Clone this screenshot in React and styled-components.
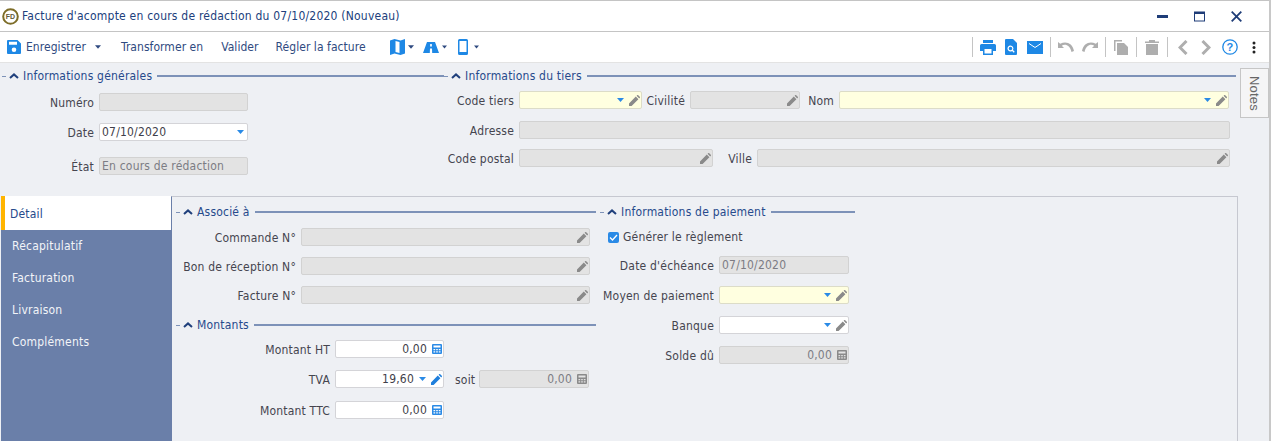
import React from "react";
import styled, { createGlobalStyle } from "styled-components";

const Global = createGlobalStyle`
  html, body { margin: 0; padding: 0; background: #eef0f4; }
  body { font-family: "DejaVu Sans", "Liberation Sans", sans-serif; font-stretch: condensed; font-size: 12px; letter-spacing: .2px; }
  * { box-sizing: border-box; }
`;

const Window = styled.div`
  width: 1271px; height: 441px; overflow: hidden; display: flex; flex-direction: column;
  background: #eef0f4; border-right: 2px solid #c8c8c8; color: #45454f;
`;
const TitleBar = styled.header`
  height: 32px; flex: none; background: #fff; border-top: 1px solid #c4c4c4; border-bottom: 1px solid #c4c4c4;
  display: flex; align-items: center; padding-left: 2px; color: #20407c;
`;
const TitleText = styled.span` margin-left: 3px; font-size: 12px; letter-spacing: .22px; flex: 1; white-space: nowrap; `;
const WinButtons = styled.div` display: flex; align-items: center; gap: 26px; margin-right: 27px; `;
const Toolbar = styled.nav`
  height: 31px; flex: none; background: #fff; border-bottom: 1px solid #e3e3e3; display: flex; align-items: center; padding-left: 7px; color: #2f4a80; letter-spacing: .05px;
`;
const ToolText = styled.span` margin-left: ${p => p.$ml}px; white-space: nowrap; `;
const ToolIcon = styled.span` display: inline-flex; margin-left: ${p => p.$ml || 0}px; `;
const Sep = styled.span` width: 1px; height: 20px; background: #c4c4c4; margin-left: ${p => p.$ml}px; `;
const Spacer = styled.span` flex: 1; `;
const EndGap = styled.span` flex: 0 0 13px; `;

const Top = styled.section` display: flex; height: 133px; flex: none; padding-left: 2px; `;
const GeneralCol = styled.div` width: 442px; padding-top: 6px; flex: none; `;
const TiersCol = styled.div` width: 792px; padding-top: 6px; flex: none; `;
const NotesTab = styled.button`
  all: unset; box-sizing: border-box; margin: 5px 0 0 4px; width: 29px; height: 50px; background: #f5f5f6; border: 1px solid #c6c6c6;
  writing-mode: vertical-rl; display: flex; align-items: center; justify-content: center; color: #666; font-family: "Liberation Sans", sans-serif; font-size: 13px;
`;

const Head = styled.div` height: 14px; display: flex; align-items: center; color: #264a8c; `;
const Dash = styled.span` width: 4px; height: 1px; background: #7d92b8; flex: none; `;
const HeadTitle = styled.span` margin: 0 5px 0 4px; white-space: nowrap; `;
const HeadLine = styled.span` flex: 1; height: 2px; background: #7d92b8; `;

const Row = styled.div` display: flex; align-items: center; height: 18px; margin-top: ${p => p.$mt || 0}px; `;
const Label = styled.label`
  width: ${p => p.$w}px; margin-right: 5px; padding-top: 2px; flex: none; text-align: right; white-space: nowrap; color: #45454f;
`;
const Box = styled.div`
  width: ${p => p.$w}px; height: 18px; flex: none; display: flex; align-items: center; gap: 5px; padding: 0 1px 0 2px; border-radius: 2px; white-space: nowrap;
  border: 1px solid ${p => p.$tone === "grey" ? "#d2d2d2" : p.$tone === "yellow" ? "#dcdcc8" : "#d4d4d8"};
  background: ${p => p.$tone === "grey" ? "#e3e3e3" : p.$tone === "yellow" ? "#ffffe0" : "#fff"};
  color: ${p => p.$tone === "grey" ? "#7c7c84" : "#3f3f4a"};
`;
const BoxText = styled.span` flex: 1; text-align: ${p => p.$right ? "right" : "left"}; `;
const SoloCaret = styled.span` display: inline-flex; margin-right: 2px; `;

const Lower = styled.section` display: flex; flex: 1; margin-left: 1px; `;
const Tabs = styled.aside` width: 170px; flex: none; background: #6a7fa9; display: flex; flex-direction: column; `;
const Tab = styled.div`
  height: ${p => p.$active ? 34 : 32}px; display: flex; align-items: center;
  padding-left: ${p => p.$active ? 5 : 11}px; padding-top: ${p => p.$active ? 2 : 0}px;
  background: ${p => p.$active ? "#fff" : "transparent"}; color: ${p => p.$active ? "#264a8c" : "#f2f4f8"};
  border-left: ${p => p.$active ? "4px solid #ffb400" : "0"};
`;
const Panel = styled.main`
  width: 1067px; flex: none; border-top: 1px solid #c6c8d0; border-right: 1px solid #c6c8d0; border-left: 1px solid #6a7fa9;
  display: flex; padding: 8px 0 0 4px;
`;
const PanelLeft = styled.div` width: 420px; flex: none; `;
const PanelRight = styled.div` width: 255px; margin-left: 4px; flex: none; `;
const SubHead = styled.div` margin-top: ${p => p.$mt}px; `;
const CheckRow = styled.div` display: flex; align-items: center; gap: 4px; height: 18px; margin: 9px 0 0 8px; `;
const Check = styled.span` width: 11px; height: 11px; border-radius: 2px; background: #2a8ae6; display: flex; align-items: center; justify-content: center; flex: none; `;
const Soit = styled.span` margin: 0 5px 0 11px; padding-top: 2px; width: 19px; `;

const Chevron = () => <svg width="10" height="6" viewBox="0 0 10 6" style={{ margin: "0 0 0 3px", flex: "none" }}><path d="M1 5l4-3.6L9 5" fill="none" stroke="#20407c" strokeWidth="2" /></svg>;
const Caret = ({ c = "#2a8ae6", w = 7 }) => <svg width={w} height="4" viewBox="0 0 7 4" style={{ flex: "none" }}><path d="M0 0h7L3.5 4z" fill={c} /></svg>;
const Pencil = ({ c = "#8a8a8a" }) => <svg width="11" height="11" viewBox="0 0 11 11" style={{ flex: "none" }}><path d="M0 11V8.400L6.800 1.600 9.400 4.200 2.600 11zM7.600.8l.6-.6c.3-.3.7-.3 1 0l1.600 1.600c.3.3.3.7 0 1l-.6.6z" fill={c} /></svg>;
const Calc = ({ c = "#2a8ae6" }) => <svg width="10" height="10" viewBox="0 0 10 10" style={{ flex: "none" }}><path fillRule="evenodd" d="M0 1a1 1 0 011-1h8a1 1 0 011 1v8a1 1 0 01-1 1H1a1 1 0 01-1-1zM1.500 1.500v2h7v-2zM1.500 5v1.200h1.700V5zm2.700 0v1.200h1.600V5zm2.600 0v1.200h1.700V5zM1.500 7.200v1.300h1.700V7.200zm2.700 0v1.300h1.600V7.200zm2.600 0v1.300h1.700V7.200z" fill={c} /></svg>;

const Section = ({ title }) => (
  <Head><Dash /><Chevron /><HeadTitle>{title}</HeadTitle><HeadLine /></Head>
);

const Field = ({ w, tone, text, right, caret, soloCaret, pencil, pencilBlue, calc, calcGrey }) => (
  <Box $w={w} $tone={tone}>
    <BoxText $right={right}>{text}</BoxText>
    {soloCaret && <SoloCaret><Caret /></SoloCaret>}
    {caret && <Caret />}
    {pencil && <Pencil />}
    {pencilBlue && <Pencil c="#1f7fdc" />}
    {calc && <Calc />}
    {calcGrey && <Calc c="#8a8a8a" />}
  </Box>
);

const BLUE = "#1e88e5";
const GR = "#aeaeae";
const DK = "#2f4a80";

export default function App() {
  return (
    <Window>
      <Global />
      <TitleBar>
        <svg width="17" height="17" viewBox="0 0 17 17" style={{ flex: "none" }}>
          <circle cx="8.500" cy="8.500" r="7.300" fill="#fff" stroke="#7d6d28" strokeWidth="2" />
          <text x="8.500" y="11" fontSize="7" fontWeight="700" textAnchor="middle" fill="#5f5a3a" fontFamily="Liberation Sans">FD</text>
        </svg>
        <TitleText>Facture d'acompte en cours de rédaction du 07/10/2020 (Nouveau)</TitleText>
        <WinButtons>
          <svg width="11" height="11" viewBox="0 0 11 11"><rect y="4" width="11" height="3" fill="#1f3d78" /></svg>
          <svg width="11" height="11" viewBox="0 0 11 11"><rect x=".5" y="1" width="10" height="9" fill="none" stroke="#1f3d78" /><rect x="0" y="1" width="11" height="2" fill="#1f3d78" /></svg>
          <svg width="11" height="11" viewBox="0 0 11 11"><path d="M.7.7l9.600 9.600M10.300.7L.7 10.300" stroke="#1f3d78" strokeWidth="1.800" /></svg>
        </WinButtons>
      </TitleBar>

      <Toolbar>
        <svg width="14" height="14" viewBox="0 0 14 14"><path fillRule="evenodd" d="M0 1a1 1 0 011-1h9.500L14 3.500V13a1 1 0 01-1 1H1a1 1 0 01-1-1zM2 1.800v3h8v-3zM7 7.400a2.300 2.300 0 100 4.600 2.300 2.300 0 000-4.600z" fill={BLUE} /></svg>
        <ToolText $ml={5}>Enregistrer</ToolText>
        <ToolIcon $ml={9}><Caret c={DK} w={6} /></ToolIcon>
        <ToolText $ml={20}>Transformer en</ToolText>
        <ToolText $ml={18}>Valider</ToolText>
        <ToolText $ml={17}>Régler la facture</ToolText>
        <ToolIcon $ml={24}><svg width="15" height="16" viewBox="0 0 15 16"><path fillRule="evenodd" d="M0 1.500L4.500 0 10.500 1.500 15 0v14.500L10.500 16 4.500 14.500 0 16zM5.500 2v11l4 1V3z" fill={BLUE} /></svg></ToolIcon>
        <ToolIcon $ml={3}><Caret c={DK} w={6} /></ToolIcon>
        <ToolIcon $ml={9}><svg width="16" height="11" viewBox="0 0 16 11"><path fillRule="evenodd" d="M4 0h8l4 11H0zM7.200 2l-.1 2.500h1.800L8.800 2zM7 6.500L6.800 11h2.400L9 6.500z" fill={BLUE} /></svg></ToolIcon>
        <ToolIcon $ml={3}><Caret c={DK} w={5} /></ToolIcon>
        <ToolIcon $ml={11}><svg width="10" height="16" viewBox="0 0 10 16"><path fillRule="evenodd" d="M1.500 0h7A1.500 1.500 0 0110 1.500v13A1.500 1.500 0 018.500 16h-7A1.500 1.500 0 010 14.500v-13A1.500 1.500 0 011.500 0zM1.500 2v11h7V2z" fill={BLUE} /></svg></ToolIcon>
        <ToolIcon $ml={6}><Caret c={DK} w={5} /></ToolIcon>
        <Spacer />
        <Sep $ml={0} />
        <ToolIcon $ml={7}><svg width="16" height="15" viewBox="0 0 16 15"><path fillRule="evenodd" d="M3 0h10v3H3zM1.500 4h13A1.500 1.500 0 0116 5.500V11h-3v4H3v-4H0V5.500A1.500 1.500 0 011.500 4zM4.500 9v4.500h7V9z" fill={BLUE} /></svg></ToolIcon>
        <ToolIcon $ml={9}><svg width="12" height="16" viewBox="0 0 12 16"><path fillRule="evenodd" d="M1 0h7l4 4v11a1 1 0 01-1 1H1a1 1 0 01-1-1V1a1 1 0 011-1zM5.500 6.500a3 3 0 101.600 5.500l1.700 1.700.9-.9L8 11a3 3 0 00-2.500-4.500zm0 1.200a1.800 1.800 0 110 3.600 1.800 1.800 0 010-3.600z" fill={BLUE} /></svg></ToolIcon>
        <ToolIcon $ml={10}><svg width="16" height="13" viewBox="0 0 16 13"><rect width="16" height="13" fill={BLUE} /><path d="M2 2.500L8 6.500l6-4" fill="none" stroke="#fff" /></svg></ToolIcon>
        <Sep $ml={7} />
        <ToolIcon $ml={7}><svg width="16" height="10" viewBox="0 0 16 10"><path d="M0 0v6h6L3.800 3.800C7 1.500 12 3 13.500 10l2.500-1C14.500 1 8 -1 2.200 1.800z" fill={GR} /></svg></ToolIcon>
        <ToolIcon $ml={8}><svg width="16" height="10" viewBox="0 0 16 10"><path d="M16 0v6h-6l2.200-2.200C9 1.500 4 3 2.500 10L0 9C1.500 1 8 -1 13.800 1.800z" fill={GR} /></svg></ToolIcon>
        <Sep $ml={7} />
        <ToolIcon $ml={8}><svg width="14" height="15" viewBox="0 0 14 15"><path d="M0 0h8v1.500H1.500V11H0z" fill={GR} /><path d="M3 3h7l4 4v8H3z" fill={GR} /></svg></ToolIcon>
        <Sep $ml={8} />
        <ToolIcon $ml={8}><svg width="14" height="15" viewBox="0 0 14 15"><path d="M4 0h6v1.500h4V3H0V1.500h4zM1 4h12v11H1z" fill={GR} /></svg></ToolIcon>
        <Sep $ml={8} />
        <ToolIcon $ml={10}><svg width="10" height="15" viewBox="0 0 10 15"><path d="M8.500 1L2 7.500 8.500 14" fill="none" stroke={GR} strokeWidth="3" /></svg></ToolIcon>
        <ToolIcon $ml={13}><svg width="10" height="15" viewBox="0 0 10 15"><path d="M1.500 1L8 7.500 1.500 14" fill="none" stroke={GR} strokeWidth="3" /></svg></ToolIcon>
        <ToolIcon $ml={11}><svg width="16" height="16" viewBox="0 0 16 16"><circle cx="8" cy="8" r="7.200" fill="none" stroke={BLUE} strokeWidth="1.300" /><text x="8" y="12" fontSize="11" fontWeight="700" textAnchor="middle" fill={BLUE} fontFamily="Liberation Sans">?</text></svg></ToolIcon>
        <ToolIcon $ml={14}><svg width="4" height="13" viewBox="0 0 4 13"><circle cx="2" cy="2" r="1.500" fill="#222" /><circle cx="2" cy="6.500" r="1.500" fill="#222" /><circle cx="2" cy="11" r="1.500" fill="#222" /></svg></ToolIcon>
        <EndGap />
      </Toolbar>

      <Top>
        <GeneralCol>
          <Section title="Informations générales" />
          <Row $mt={10}><Label $w={92}>Numéro</Label><Field w={149} tone="grey" /></Row>
          <Row $mt={12}><Label $w={92}>Date</Label><Field w={149} text="07/10/2020" soloCaret /></Row>
          <Row $mt={16}><Label $w={92}>État</Label><Field w={149} tone="grey" text="En cours de rédaction" /></Row>
        </GeneralCol>
        <TiersCol>
          <Section title="Informations du tiers" />
          <Row $mt={8}>
            <Label $w={70}>Code tiers</Label><Field w={123} tone="yellow" caret pencil />
            <Label $w={43}>Civilité</Label><Field w={110} tone="grey" pencil />
            <Label $w={34}>Nom</Label><Field w={390} tone="yellow" caret pencil />
          </Row>
          <Row $mt={12}><Label $w={70}>Adresse</Label><Field w={711} tone="grey" /></Row>
          <Row $mt={10}>
            <Label $w={70}>Code postal</Label><Field w={194} tone="grey" pencil />
            <Label $w={39}>Ville</Label><Field w={473} tone="grey" pencil />
          </Row>
        </TiersCol>
        <NotesTab>Notes</NotesTab>
      </Top>

      <Lower>
        <Tabs>
          <Tab $active>Détail</Tab>
          <Tab>Récapitulatif</Tab>
          <Tab>Facturation</Tab>
          <Tab>Livraison</Tab>
          <Tab>Compléments</Tab>
        </Tabs>
        <Panel>
          <PanelLeft>
            <Section title="Associé à" />
            <Row $mt={9}><Label $w={120}>Commande N°</Label><Field w={289} tone="grey" pencil /></Row>
            <Row $mt={11}><Label $w={120}>Bon de réception N°</Label><Field w={289} tone="grey" pencil /></Row>
            <Row $mt={11}><Label $w={120}>Facture N°</Label><Field w={289} tone="grey" pencil /></Row>
            <SubHead $mt={14}><Section title="Montants" /></SubHead>
            <Row $mt={8}><Label $w={154}>Montant HT</Label><Field w={109} text="0,00" right calc /></Row>
            <Row $mt={12}>
              <Label $w={154}>TVA</Label><Field w={109} text="19,60" right caret pencilBlue />
              <Soit>soit</Soit><Field w={110} tone="grey" text="0,00" right calcGrey />
            </Row>
            <Row $mt={13}><Label $w={154}>Montant TTC</Label><Field w={109} text="0,00" right calc /></Row>
          </PanelLeft>
          <PanelRight>
            <Section title="Informations de paiement" />
            <CheckRow>
              <Check><svg width="9" height="7" viewBox="0 0 9 7"><path d="M1 3.500l2.500 2.500L8 1" fill="none" stroke="#fff" strokeWidth="1.300" /></svg></Check>
              Générer le règlement
            </CheckRow>
            <Row $mt={10}><Label $w={114}>Date d'échéance</Label><Field w={130} tone="grey" text="07/10/2020" /></Row>
            <Row $mt={12}><Label $w={114}>Moyen de paiement</Label><Field w={130} tone="yellow" caret pencil /></Row>
            <Row $mt={12}><Label $w={114}>Banque</Label><Field w={130} caret pencil /></Row>
            <Row $mt={12}><Label $w={114}>Solde dû</Label><Field w={130} tone="grey" text="0,00" right calcGrey /></Row>
          </PanelRight>
        </Panel>
      </Lower>
    </Window>
  );
}
